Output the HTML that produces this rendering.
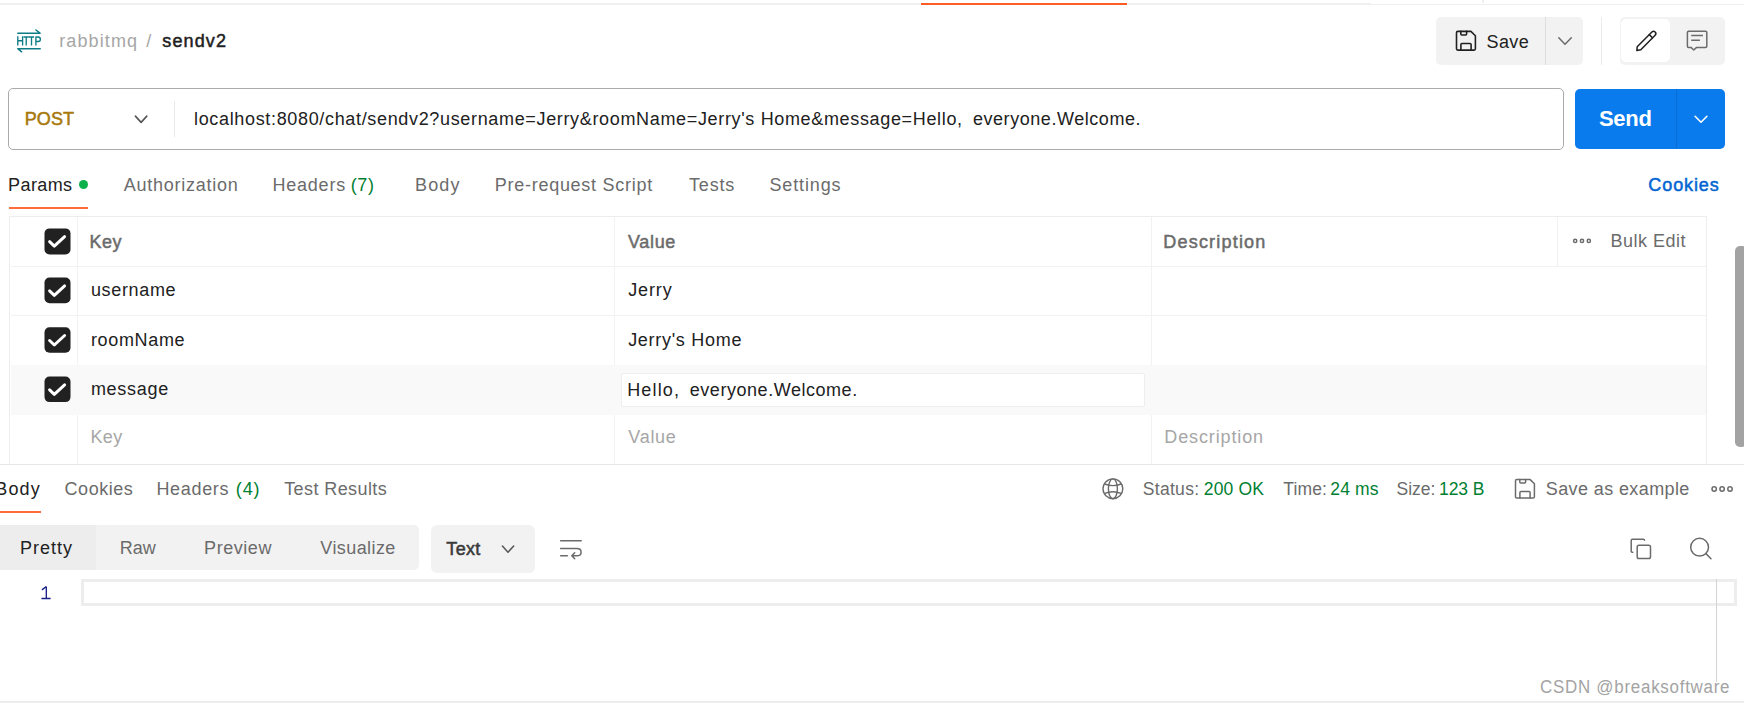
<!DOCTYPE html>
<html><head><meta charset="utf-8">
<style>
*{box-sizing:border-box;margin:0;padding:0}
html,body{width:1744px;height:703px;overflow:hidden;background:#fff;font-family:"Liberation Sans",sans-serif;color:#212121}
.a{position:absolute}
.t{position:absolute;white-space:nowrap;font-size:18px;line-height:18px}
svg{position:absolute;overflow:visible}
</style></head><body>
<!-- top strip -->
<div class="a" style="left:0;top:3px;width:1371px;height:2px;background:#efefef"></div>
<div class="a" style="left:1371px;top:4px;width:373px;height:1px;background:#efefef"></div>
<div class="a" style="left:1482px;top:0;width:2px;height:3px;background:#efefef"></div>
<div class="a" style="left:921px;top:3px;width:206px;height:2px;background:#ff5c26"></div>
<!-- save group -->
<div class="a" style="left:1436px;top:17px;width:147px;height:47.5px;background:#f2f2f2;border-radius:5px"></div>
<div class="a" style="left:1545px;top:17px;width:1px;height:47.5px;background:#dedede"></div>
<div class="a" style="left:1601px;top:17px;width:1px;height:47.5px;background:#ebebeb"></div>
<div class="a" style="left:1620px;top:17px;width:105px;height:47.5px;background:#f2f2f2;border-radius:5px"></div>
<div class="a" style="left:1621px;top:18.5px;width:49px;height:43.5px;background:#fff;border-radius:5px"></div>
<!-- url bar -->
<div class="a" style="left:8px;top:88px;width:1556px;height:62px;border:1px solid #ababab;border-radius:5px"></div>
<div class="a" style="left:174px;top:101px;width:1px;height:36px;background:#e8e8e8"></div>
<!-- send -->
<div class="a" style="left:1575px;top:89px;width:150px;height:60px;background:#0a7bec;border-radius:5px"></div>
<div class="a" style="left:1676px;top:89px;width:1px;height:60px;background:#0b6dd3"></div>
<!-- params tab -->
<div class="a" style="left:79px;top:180px;width:9px;height:9px;border-radius:50%;background:#0cb14b"></div>
<div class="a" style="left:9px;top:207px;width:79px;height:2px;background:#ff6c37"></div>
<!-- table -->
<div class="a" style="left:9px;top:216px;width:1698px;height:1px;background:#ededed"></div>
<div class="a" style="left:9px;top:216px;width:1px;height:248px;background:#ededed"></div>
<div class="a" style="left:1706px;top:216px;width:1px;height:248px;background:#ededed"></div>
<div class="a" style="left:0;top:464px;width:1744px;height:1px;background:#e6e6e6"></div>
<div class="a" style="left:11px;top:266px;width:1695px;height:1px;background:#f2f2f2"></div>
<div class="a" style="left:11px;top:315px;width:1695px;height:1px;background:#f2f2f2"></div>
<div class="a" style="left:11px;top:365px;width:1695px;height:1px;background:#f3f3f3"></div>
<div class="a" style="left:77px;top:217px;width:1px;height:247px;background:#f2f2f2"></div>
<div class="a" style="left:614px;top:217px;width:1px;height:247px;background:#f2f2f2"></div>
<div class="a" style="left:1151px;top:217px;width:1px;height:247px;background:#f2f2f2"></div>
<div class="a" style="left:1557px;top:217px;width:1px;height:49px;background:#f2f2f2"></div>
<div class="a" style="left:11px;top:365px;width:1695px;height:49.5px;background:#f9f9f9"></div>
<div class="a" style="left:621px;top:372.5px;width:523.5px;height:34px;background:#fff;border:1px solid #eeeeee;border-radius:2px"></div>
<div class="a" style="left:1735px;top:246px;width:12px;height:201px;background:#a3a3a3;border-radius:5px"></div>
<!-- response -->
<div class="a" style="left:0;top:511px;width:41px;height:2px;background:#ff6c37"></div>
<div class="a" style="left:-6px;top:525px;width:425px;height:45px;background:#f2f2f2;border-radius:5px"></div>
<div class="a" style="left:-6px;top:525px;width:102px;height:45px;background:#ededed;border-radius:5px 0 0 5px"></div>
<div class="a" style="left:431px;top:525px;width:104px;height:48px;background:#f2f2f2;border-radius:6px"></div>
<div class="a" style="left:81px;top:579px;width:1656px;height:27px;border:3px solid #ededed"></div>
<div class="a" style="left:1716px;top:579px;width:1px;height:103px;background:#d4d4d4"></div>
<div class="a" style="left:0;top:701px;width:1744px;height:2px;background:#ededed"></div>

<svg width="1744" height="703" style="left:0;top:0" fill="none" stroke-linecap="round" stroke-linejoin="round">
 <!-- HTTP -->
 <g stroke="#0e7c86" stroke-width="1.5">
  <path d="M17.8 33.2H40M35.9 30L40 33.2M17.8 48.7H40.2M17.8 48.7L21.6 51.8"/>
  <path d="M17.8 36.3V45.5M22.6 36.3V45.5M17.8 40.7H22.6M23.6 36.95H28.8M26.2 36.3V45.5M28.9 36.95H34.1M31.5 36.3V45.5M35.9 45.5V36.95H38.1Q40.4 36.95 40.4 39.2Q40.4 41.45 38.1 41.45H35.9" stroke-linecap="butt" stroke-width="1.35"/>
 </g>
 <!-- floppy save -->
 <g stroke="#212121" stroke-width="1.6">
  <path d="M1457.8 31.4H1470.9L1475.4 35.8V48.8Q1475.4 50.1 1474.1 50.1H1457.8Q1456.5 50.1 1456.5 48.8V32.7Q1456.5 31.4 1457.8 31.4Z"/>
  <path d="M1460.8 31.4V34Q1460.8 35 1461.8 35H1465.6Q1466.6 35 1466.6 34V31.4M1460.9 50.1V44.6Q1460.9 43.5 1462 43.5H1470Q1471.1 43.5 1471.1 44.6V50.1"/>
 </g>
 <path d="M1558.8 37.8L1565 44.3L1571.3 37.8" stroke="#6b6b6b" stroke-width="1.5"/>
 <!-- pencil -->
 <g stroke="#212121" stroke-width="1.42" transform="translate(1646.2 40.8) scale(1.06) translate(-1646 -40.5)">
  <path d="M1637.2 49.7L1637.5 46.1L1651.4 32.2A2.15 2.15 0 0 1 1654.44 35.24L1640.9 48.9Z"/>
  <path d="M1648.9 34.7L1651.9 37.7"/>
 </g>
 <!-- comment -->
 <g stroke="#6b6b6b" stroke-width="1.5">
  <path d="M1688.6 31.2H1705.6Q1706.8 31.2 1706.8 32.4V46.2Q1706.8 47.4 1705.6 47.4H1696.6L1693.8 50L1691 47.4H1688.6Q1687.4 47.4 1687.4 46.2V32.4Q1687.4 31.2 1688.6 31.2Z"/>
  <path d="M1691.2 35.6H1702.9M1691.2 40.3H1699.9" stroke-linecap="butt"/>
 </g>
 <!-- post chevron / send chevron -->
 <path d="M135.4 116.1L141.1 122.4L146.8 116.1" stroke="#555" stroke-width="1.6"/>
 <path d="M1695.1 116.3L1701 122.2L1706.9 116.3" stroke="#fff" stroke-width="1.6"/>
 <!-- checkboxes -->
 <g>
  <rect x="44.5" y="228.4" width="26" height="26" rx="5" fill="#212121"/>
  <rect x="44.5" y="277.6" width="26" height="25.6" rx="5" fill="#212121"/>
  <rect x="44.5" y="327.2" width="26" height="25.6" rx="5" fill="#212121"/>
  <rect x="44.5" y="376.5" width="26" height="25.6" rx="5" fill="#212121"/>
  <g stroke="#fff" stroke-width="3">
   <path d="M49.6 241.7L54.3 246.2L64.6 236.7"/>
   <path d="M49.6 290.9L54.3 295.4L64.6 285.9"/>
   <path d="M49.6 340.5L54.3 345L64.6 335.5"/>
   <path d="M49.6 389.8L54.3 394.3L64.6 384.8"/>
  </g>
 </g>
 <!-- bulk dots -->
 <g stroke="#6b6b6b" stroke-width="1.5"><circle cx="1575.2" cy="240.9" r="1.6"/><circle cx="1582" cy="240.9" r="1.6"/><circle cx="1588.8" cy="240.9" r="1.6"/></g>
 <!-- globe -->
 <g stroke="#6b6b6b" stroke-width="1.4">
  <circle cx="1112.9" cy="488.8" r="9.9"/>
  <ellipse cx="1112.9" cy="488.8" rx="4.5" ry="9.9"/>
  <path d="M1104.6 484Q1112.9 487.2 1121.2 484M1104.6 493.4Q1112.9 490.2 1121.2 493.4"/>
 </g>
 <!-- save icon status -->
 <g stroke="#6b6b6b" stroke-width="1.5">
<g transform="translate(59 448)">  <path d="M1457.8 31.4H1470.9L1475.4 35.8V48.8Q1475.4 50.1 1474.1 50.1H1457.8Q1456.5 50.1 1456.5 48.8V32.7Q1456.5 31.4 1457.8 31.4Z"/>  <path d="M1460.8 31.4V34Q1460.8 35 1461.8 35H1465.6Q1466.6 35 1466.6 34V31.4M1460.9 50.1V44.6Q1460.9 43.5 1462 43.5H1470Q1471.1 43.5 1471.1 44.6V50.1"/></g>
 </g>
 <g stroke="#6b6b6b" stroke-width="1.5"><circle cx="1714.2" cy="489" r="2.2"/><circle cx="1722.1" cy="489" r="2.2"/><circle cx="1730" cy="489" r="2.2"/></g>
 <!-- text chevron -->
 <path d="M502.4 546.1L508 552.2L513.7 546.1" stroke="#555" stroke-width="1.5"/>
 <!-- wrap -->
 <g stroke="#6b6b6b" stroke-width="1.5">
  <path d="M560.6 540.7H581.2M560.6 548.6H576.8Q581.1 548.6 581.1 552.2Q581.1 555.8 576.8 555.8H572M574.7 552.8L571.8 555.8L574.7 558.8M560.6 555.8H567.4"/>
 </g>
 <!-- copy -->
 <g stroke="#6b6b6b" stroke-width="1.5">
  <path d="M1632.8 552.2H1632.2Q1631.2 552.2 1631.2 551.2V540.4Q1631.2 539.2 1632.4 539.2H1643.4Q1644.5 539.2 1644.5 540.3"/>
  <rect x="1637.2" y="545.2" width="13.3" height="13.4" rx="1.8"/>
 </g>
 <g stroke="#6b6b6b" stroke-width="1.5"><circle cx="1699.6" cy="547.2" r="8.9"/><path d="M1705.9 553.6L1711 558.7"/></g>
 <path d="M46.3 586.5V598.5M46.3 586.5L41.9 589.9M41.4 598.5H50.6" stroke="#16228a" stroke-width="1.35" stroke-linecap="butt" stroke-linejoin="miter"/>
</svg>

<div class="t" style="left:59.21px;top:31.8px;color:#a6a6a6;letter-spacing:1.124px">rabbitmq</div>
<div class="t" style="left:146.26px;top:31.8px;color:#a6a6a6">/</div>
<div class="t" style="left:162.26px;top:31.8px;color:#212121;-webkit-text-stroke:0.5px #212121;letter-spacing:1.144px">sendv2</div>
<div class="t" style="left:1486.42px;top:32.5px;color:#212121;letter-spacing:0.469px">Save</div>
<div class="t" style="left:24.74px;top:109.7px;color:#a8780a;-webkit-text-stroke:0.5px #a8780a;letter-spacing:0.085px">POST</div>
<div class="t" style="left:194.01px;top:109.7px;color:#212121;letter-spacing:0.66px">localhost:8080/chat/sendv2?username=Jerry&amp;roomName=Jerry's Home&amp;message=Hello,</div>
<div class="t" style="left:972.93px;top:109.7px;color:#212121;letter-spacing:0.553px">everyone.Welcome.</div>
<div class="t" style="left:1599.03px;top:108px;color:#ffffff;font-size:22px;line-height:22px;font-weight:700;letter-spacing:-0.328px">Send</div>
<div class="t" style="left:8.09px;top:175.8px;color:#212121;letter-spacing:0.397px">Params</div>
<div class="t" style="left:123.68px;top:175.8px;color:#6b6b6b;letter-spacing:0.751px">Authorization</div>
<div class="t" style="left:272.49px;top:175.8px;color:#6b6b6b;letter-spacing:0.773px">Headers</div>
<div class="t" style="left:350.78px;top:175.8px;color:#007f31;letter-spacing:0.562px">(7)</div>
<div class="t" style="left:415.09px;top:175.8px;color:#6b6b6b;letter-spacing:1.109px">Body</div>
<div class="t" style="left:494.79px;top:175.8px;color:#6b6b6b;letter-spacing:0.726px">Pre-request Script</div>
<div class="t" style="left:688.95px;top:175.8px;color:#6b6b6b;letter-spacing:0.84px">Tests</div>
<div class="t" style="left:769.42px;top:175.8px;color:#6b6b6b;letter-spacing:0.866px">Settings</div>
<div class="t" style="left:1648.35px;top:175.8px;color:#0265d2;-webkit-text-stroke:0.5px #0265d2;letter-spacing:0.894px">Cookies</div>
<div class="t" style="left:89.44px;top:233px;color:#6b6b6b;-webkit-text-stroke:0.5px #6b6b6b;letter-spacing:0.518px">Key</div>
<div class="t" style="left:628.05px;top:232.8px;color:#6b6b6b;-webkit-text-stroke:0.5px #6b6b6b;letter-spacing:0.651px">Value</div>
<div class="t" style="left:1163.33px;top:233px;color:#6b6b6b;-webkit-text-stroke:0.5px #6b6b6b;letter-spacing:1.194px">Description</div>
<div class="t" style="left:1610.49px;top:231.9px;color:#6b6b6b;letter-spacing:0.512px">Bulk Edit</div>
<div class="t" style="left:90.95px;top:281px;color:#212121;letter-spacing:0.654px">username</div>
<div class="t" style="left:90.91px;top:330.7px;color:#212121;letter-spacing:0.672px">roomName</div>
<div class="t" style="left:90.9px;top:380px;color:#212121;letter-spacing:0.702px">message</div>
<div class="t" style="left:90.49px;top:427.7px;color:#a6a6a6;letter-spacing:0.355px">Key</div>
<div class="t" style="left:628.17px;top:280.7px;color:#212121;letter-spacing:0.889px">Jerry</div>
<div class="t" style="left:628.17px;top:330.7px;color:#212121;letter-spacing:0.709px">Jerry's Home</div>
<div class="t" style="left:627.19px;top:381px;color:#212121;letter-spacing:1.158px">Hello,</div>
<div class="t" style="left:689.73px;top:381px;color:#212121;letter-spacing:0.545px">everyone.Welcome.</div>
<div class="t" style="left:628.37px;top:427.7px;color:#a6a6a6;letter-spacing:0.685px">Value</div>
<div class="t" style="left:1164.29px;top:427.7px;color:#a6a6a6;letter-spacing:0.88px">Description</div>
<div class="t" style="left:-4.71px;top:479.5px;color:#212121;letter-spacing:1.109px">Body</div>
<div class="t" style="left:64.59px;top:479.5px;color:#6b6b6b;letter-spacing:0.542px">Cookies</div>
<div class="t" style="left:156.39px;top:479.5px;color:#6b6b6b;letter-spacing:0.687px">Headers</div>
<div class="t" style="left:235.68px;top:479.5px;color:#007f31;letter-spacing:0.964px">(4)</div>
<div class="t" style="left:284.15px;top:479.5px;color:#6b6b6b;letter-spacing:0.418px">Test Results</div>
<div class="t" style="left:1142.73px;top:480.8px;color:#6b6b6b;font-size:17.5px;line-height:17.5px;letter-spacing:0.319px">Status:</div>
<div class="t" style="left:1203.77px;top:480.8px;color:#007f31;font-size:17.5px;line-height:17.5px;letter-spacing:0.143px">200 OK</div>
<div class="t" style="left:1283.26px;top:480.8px;color:#6b6b6b;font-size:17.5px;line-height:17.5px;letter-spacing:0.143px">Time:</div>
<div class="t" style="left:1330.37px;top:480.8px;color:#007f31;font-size:17.5px;line-height:17.5px;letter-spacing:0.132px">24 ms</div>
<div class="t" style="left:1396.53px;top:480.8px;color:#6b6b6b;font-size:17.5px;line-height:17.5px;letter-spacing:0.006px">Size:</div>
<div class="t" style="left:1439.12px;top:480.8px;color:#007f31;font-size:17.5px;line-height:17.5px;letter-spacing:-0.107px">123 B</div>
<div class="t" style="left:1545.82px;top:479.8px;color:#6b6b6b;letter-spacing:0.39px">Save as example</div>
<div class="t" style="left:19.99px;top:539.2px;color:#212121;letter-spacing:0.98px">Pretty</div>
<div class="t" style="left:119.79px;top:539.2px;color:#6b6b6b;letter-spacing:0.03px">Raw</div>
<div class="t" style="left:204.09px;top:539.2px;color:#6b6b6b;letter-spacing:0.555px">Preview</div>
<div class="t" style="left:320.37px;top:539.2px;color:#6b6b6b;letter-spacing:0.408px">Visualize</div>
<div class="t" style="left:446.37px;top:539.8px;color:#393939;-webkit-text-stroke:0.5px #393939;letter-spacing:0.27px">Text</div>
<div class="t" style="left:1540.19px;top:677.9px;color:#a3a3a3;letter-spacing:0.127px;transform:scaleX(0.94);transform-origin:0 0;letter-spacing:0.792px">CSDN @breaksoftware</div>
</body></html>
